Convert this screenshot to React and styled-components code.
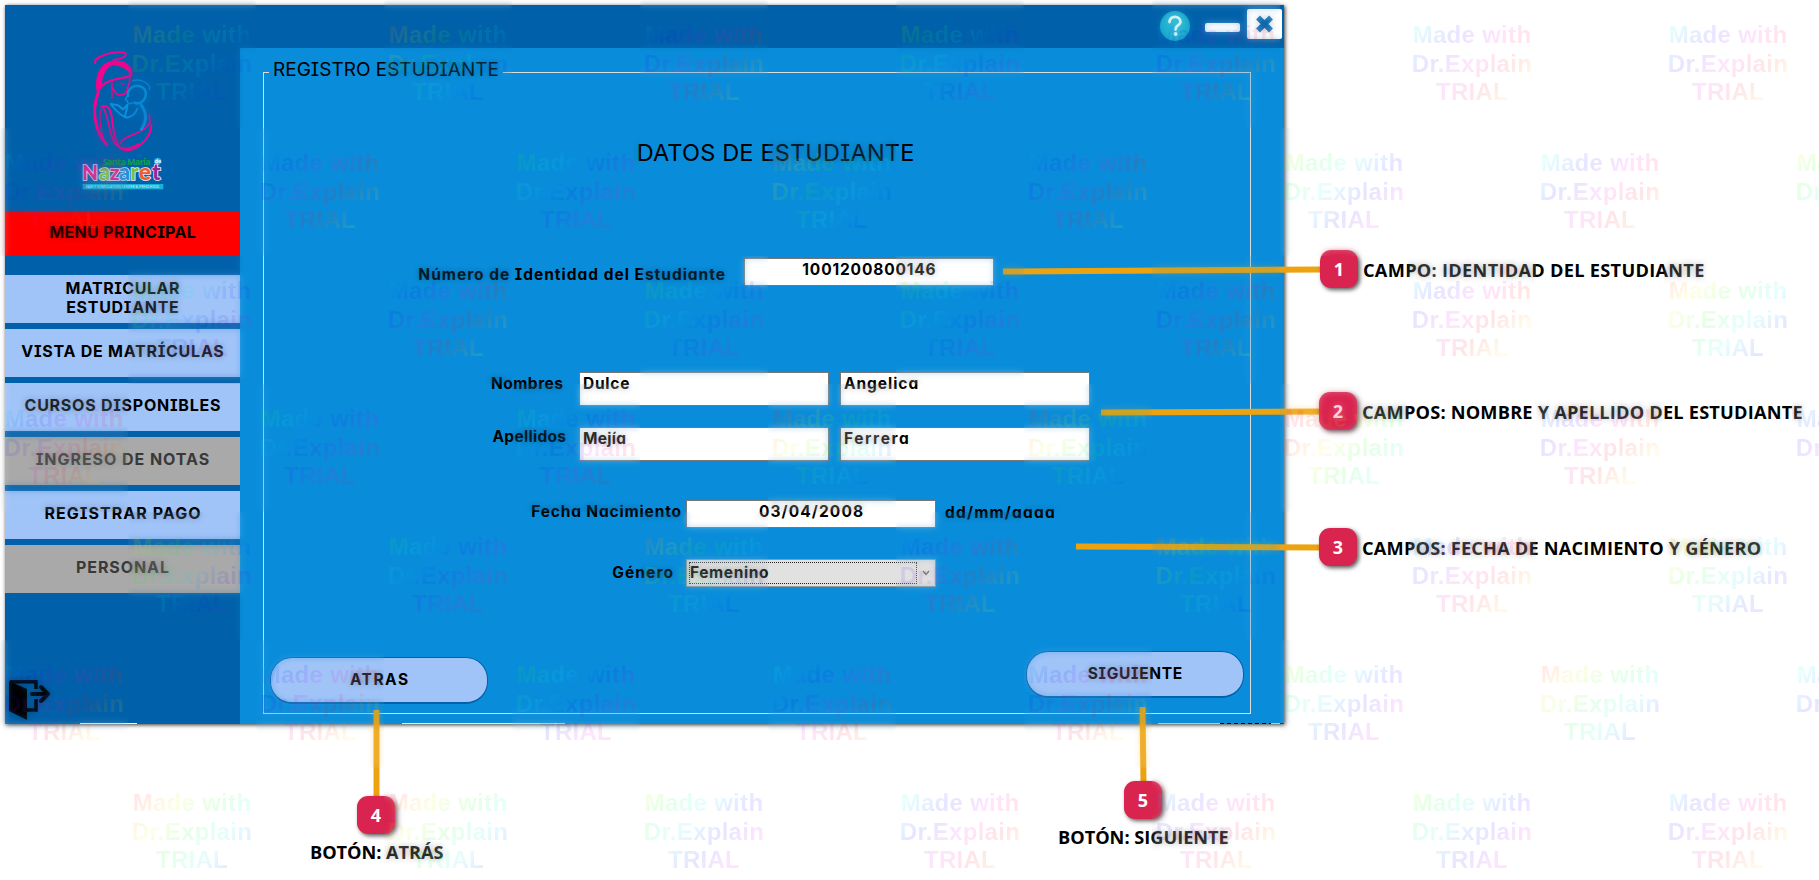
import React from "react";
import styled, { createGlobalStyle } from "styled-components";

const GlobalStyle = createGlobalStyle`
  body { margin: 0; background: #fff; overflow: hidden; }
  * { box-sizing: border-box; }
`;

const Page = styled.div`
  position: relative;
  width: 1819px;
  height: 880px;
  padding: 5px;
  overflow: hidden;
  font-family: "Inter", "Liberation Sans", sans-serif;
  font-feature-settings: "cv08", "cv11";
  font-size: 16px;
  font-weight: 700;
  line-height: 20px;
  color: #000;
`;

const Window = styled.div`
  display: flex;
  width: 1279px;
  height: 719px;
  background: #0061aa;
  box-shadow: 1px 1px 4px 0 rgba(0, 0, 0, 0.8);
`;

const Sidebar = styled.nav`
  display: flex;
  flex-direction: column;
  width: 235px;
`;

const LogoArea = styled.div`
  height: 207px;
  padding: 41px 0 0 71px;
`;

const Spaced = styled.span`
  letter-spacing: ${(p) => p.$ls}px;
  margin-right: ${(p) => -p.$ls}px;
  white-space: nowrap;
`;

const MenuHeading = styled.div`
  display: flex;
  align-items: center;
  justify-content: center;
  height: 44px;
  padding-bottom: 4px;
  margin-bottom: 19px;
  background: #f00;
`;

const MenuList = styled.div`
  display: flex;
  flex-direction: column;
  gap: 6px;
`;

const MenuButton = styled.div`
  display: flex;
  flex-direction: column;
  align-items: center;
  justify-content: center;
  height: 48px;
  padding-bottom: ${(p) => (p.$double ? 3 : 4)}px;
  line-height: 19px;
  background: ${(p) => (p.$disabled ? "#a9a9a9" : "#a0c4f8")};
  color: ${(p) => (p.$disabled ? "#393939" : "#000")};
`;

const ExitArea = styled.div`
  margin-top: auto;
  padding: 0 0 4px 4px;
  line-height: 0;
`;

const Main = styled.main`
  display: flex;
  flex-direction: column;
  flex: 1;
`;

const TitleBar = styled.header`
  display: flex;
  height: 43px;
  justify-content: flex-end;
  align-items: flex-start;
  padding: 4px 2px 0 0;
`;

const HelpIcon = styled.div`
  width: 30px;
  height: 30px;
  margin: 2px 15px 0 0;
`;

const MinimizeIcon = styled.div`
  width: 35px;
  height: 9px;
  margin: 14px 7px 0 0;
  border-radius: 2px;
  background: #fff;
`;

const CloseIcon = styled.div`
  width: 35px;
  height: 30px;
  border-radius: 2px;
  background: #fff;
`;

const Body = styled.section`
  flex: 1;
  padding: 24px 33px 0 23px;
  background: #098ddb;
`;

const Frame = styled.div`
  position: relative;
  display: flex;
  flex-direction: column;
  height: 642px;
  border: 1px solid #dcdcdc;
`;

const Legend = styled.div`
  position: absolute;
  top: -15px;
  left: 5px;
  padding: 0 4px 0 4px;
  background: #098ddb;
  font-size: 19px;
  font-weight: 400;
  line-height: 24px;
`;

const Title = styled.h1`
  margin: 67px 0 0;
  padding-left: 37px;
  font-size: 23.5px;
  font-weight: 400;
  line-height: 25px;
  text-align: center;
`;

const Row = styled.div`
  display: flex;
  align-items: flex-start;
  height: ${(p) => p.$height}px;
  margin-top: ${(p) => p.$top}px;
`;

const Label = styled.label`
  width: ${(p) => p.$width}px;
  margin-right: ${(p) => p.$gap}px;
  padding-top: ${(p) => p.$drop}px;
  font-size: 15.5px;
  text-align: right;
`;

const Field = styled.div`
  width: 250px;
  height: 100%;
  margin-right: 11px;
  padding: 1px 3px 0;
  border: 1px solid #777;
  background: #fff;
  font-size: 15.5px;
  text-align: ${(p) => (p.$center ? "center" : "left")};
`;

const Suffix = styled.span`
  margin: 3px 0 0 -2px;
  font-size: 15.5px;
`;

const Select = styled.div`
  display: flex;
  align-items: center;
  width: 250px;
  height: 28px;
  padding: 0 5px 0 2px;
  border: 1px solid #999;
  background: #e1e1e1;
  font-size: 15.5px;
`;

const SelectValue = styled.span`
  flex: 1;
  height: 22px;
  margin-right: 5px;
  border: 1px dotted #222;
  line-height: 19px;
`;

const Actions = styled.div`
  display: flex;
  justify-content: space-between;
  align-items: flex-start;
  margin-top: 63px;
  padding: 0 6px;
`;

const ActionButton = styled.div`
  width: 218px;
  height: 47px;
  margin-top: ${(p) => p.$drop}px;
  padding-top: 12px;
  border: 1px solid #0061aa;
  border-bottom-width: 2px;
  border-radius: 22px;
  background: #a0c4f8;
  font-size: 15.5px;
  text-align: center;
`;

const BottomSliver = styled.div`
  position: absolute;
  left: 5px;
  top: 723px;
  width: 1279px;
  height: 1px;
  background: linear-gradient(90deg, transparent 75px, #fff 75px 132px, transparent 132px 397px,
    #dff0fa 397px 560px, transparent 560px 1153px, #9fd0f2 1153px 1215px, transparent 1215px 1266px, #9fd0f2 1266px 1275px, #124 1275px),
    repeating-linear-gradient(90deg, #000 0 4px, transparent 4px 7px) 1215px 0 / 51px 1px no-repeat;
`;

const Connectors = styled.svg`
  position: absolute;
  left: 0;
  top: 0;
`;

const Badge = styled.div`
  position: absolute;
  left: ${(p) => p.$x}px;
  top: ${(p) => p.$y}px;
  width: 38px;
  height: 38px;
  border-radius: 11px;
  background: #d9244f;
  box-shadow: 2px 2px 4px rgba(0, 0, 0, 0.65);
  color: #fff;
  font: bold 18px/38px "Open Sans", sans-serif;
  font-feature-settings: normal;
  text-align: center;
`;

const Caption = styled.div`
  position: absolute;
  left: ${(p) => p.$x}px;
  top: ${(p) => p.$y}px;
  font: bold 18.2px/24px "Open Sans", sans-serif;
  font-feature-settings: normal;
  white-space: nowrap;
`;

const Overlay = styled.div`
  position: absolute;
  inset: 0;
  display: grid;
  grid-template-columns: repeat(15, 128px);
  grid-auto-rows: 128px;
  pointer-events: none;
`;

const Tile = styled.div`
  position: relative;
`;

const Haze = styled.div`
  position: absolute;
  inset: 0;
  backdrop-filter: blur(3px);
  opacity: 0.3;
`;

const Mark = styled.div`
  position: absolute;
  inset: 0;
  padding-top: 21px;
  background: ${(p) => p.$rainbow};
  background-clip: text;
  -webkit-background-clip: text;
  color: transparent;
  opacity: 0.1;
  font: bold 24px/28.5px "Liberation Sans", sans-serif;
  letter-spacing: 0.3px;
  text-align: center;
  white-space: pre;
`;

const MENU = [
  { lines: [["MATRICULAR", 0.5], ["ESTUDIANTE", 0.7]] },
  { lines: [["VISTA DE MATRÍCULAS", 0.75]] },
  { lines: [["CURSOS DISPONIBLES", 0.75]] },
  { lines: [["INGRESO DE NOTAS", 0.95]], disabled: true },
  { lines: [["REGISTRAR PAGO", 1.05]] },
  { lines: [["PERSONAL", 0.9]], disabled: true },
];

const CALLOUTS = [
  { n: 1, x: 1320, y: 250, tx: 1363, ty: 258, text: "CAMPO: IDENTIDAD DEL ESTUDIANTE", ls: 0.28 },
  { n: 2, x: 1319, y: 392, tx: 1362, ty: 400, text: "CAMPOS: NOMBRE Y APELLIDO DEL ESTUDIANTE", ls: 0.2 },
  { n: 3, x: 1319, y: 528, tx: 1362, ty: 536, text: "CAMPOS: FECHA DE NACIMIENTO Y GÉNERO", ls: 0.2 },
  { n: 4, x: 357, y: 796, tx: 310, ty: 840, text: "BOTÓN: ATRÁS", ls: -0.05 },
  { n: 5, x: 1124, y: 781, tx: 1058, ty: 825, text: "BOTÓN: SIGUIENTE", ls: -0.02 },
];

const HUES = [
  [40, 30, 200, 90, 200, 180, 180],
  [190, 200, 120, 20, 200, 80, 170, 80],
  [90, 200, 100, 100, 200, 200, 20],
  [190, 130, 140, 0, 0, 320, 200, 200],
  [60, 130, 30, 210, 30, 190, 40],
  [200, 200, 110, 170, 200, 90, 10, 170],
  [0, 0, 90, 170, 190, 95, 195],
];

const rainbow = (hue) => {
  const stops = [];
  for (let i = 0; i <= 12; i += 1) stops.push(`hsl(${(hue - 52 + i * 30 + 360) % 360} 100% 50%)`);
  return `linear-gradient(135deg, ${stops.join(", ")})`;
};

function Watermarks() {
  const tiles = [];
  for (let row = 0; row < 7; row += 1) {
    for (let col = 0; col < 15; col += 1) {
      const active = (row + col) % 2 === 1;
      tiles.push(
        <Tile key={`${row}-${col}`}>
          {active && <Haze />}
          {active && (
            <Mark $rainbow={rainbow(HUES[row][Math.floor(col / 2)])}>{"Made with\nDr.Explain\nTRIAL"}</Mark>
          )}
        </Tile>
      );
    }
  }
  return <Overlay>{tiles}</Overlay>;
}

function Logo() {
  const letters = [
    ["N", 18, "#e0218a", 62], ["a", 68, "#7ac143", 66], ["z", 101, "#e0218a", 64], ["a", 128, "#1b8fd6", 66],
    ["r", 163, "#7ac143", 66], ["e", 188, "#f0592a", 68], ["t", 228, "#8e2a9b", 68],
  ];
  return (
    <svg width="95" height="150" viewBox="0 0 285 450">
      <g fill="none" stroke="#f0058c" strokeLinecap="round" strokeLinejoin="round">
        <path d="M58 52C50 36 96 18 137 19C162 21 148 38 112 42" strokeWidth="6" />
        <path d="M66 140C58 98 70 52 112 47C148 44 166 62 166 86C156 102 90 90 67 134" strokeWidth="7" />
        <path d="M67 130C62 90 76 58 110 52C82 66 74 92 73 118Z" fill="#f0058c" strokeWidth="8" />
        <path d="M108 48C142 46 162 62 166 86C154 66 136 56 108 54Z" fill="#f0058c" strokeWidth="5" />
        <path d="M160 92C166 108 154 120 153 132C148 150 124 152 116 136L108 124" strokeWidth="5" />
        <path d="M132 111Q142 120 148 113" strokeWidth="3" />
        <path d="M68 136C54 170 52 205 62 240C70 268 80 282 92 296" strokeWidth="9" />
        <path d="M92 296C72 262 68 216 76 188" strokeWidth="3" />
        <path d="M76 182C96 174 104 190 108 216C112 260 120 300 138 310C180 324 226 274 226 236" strokeWidth="6" />
        <path d="M108 108L108 156" strokeWidth="4" />
        <path d="M82 186C96 206 100 264 116 292C134 314 158 312 188 294" strokeWidth="5" />
        <path d="M134 292C144 264 204 268 222 228L220 206" strokeWidth="5" />
      </g>
      <g fill="none" stroke="#0a90dc" strokeLinecap="round" strokeLinejoin="round">
        <path d="M156 150C152 120 194 108 208 134C214 160 194 178 176 170" strokeWidth="8" />
        <path d="M170 104C200 96 226 118 220 130" strokeWidth="4" />
        <path d="M156 148L148 160L154 166L158 174L172 170" strokeWidth="4" />
        <path d="M104 174L126 178L142 190L154 176C158 190 144 198 148 214C136 208 118 192 104 174Z" fill="#0061aa" strokeWidth="6" />
        <path d="M148 214C168 216 180 200 184 188" strokeWidth="6" />
        <path d="M196 178C212 200 212 226 196 250" strokeWidth="9" />
      </g>
      <text x="80" y="356" fontFamily="Open Sans" fontSize="27" fontWeight="700" fill="#12a04b" textLength="144">Santa María</text>
      <circle cx="245" cy="346" r="11" fill="#2aa9e0" />
      <text x="236" y="352" fontFamily="Open Sans" fontSize="16" fontWeight="700" fill="#fff">de</text>
      <g fontFamily="Lato" fontWeight="900" stroke="#f3e6f3" strokeWidth="5" paintOrder="stroke">
        {letters.map(([c, x, fill, size]) => (
          <text key={x} x={x} y="403" fill={fill} fontSize={size}>{c}</text>
        ))}
      </g>
      <rect x="20" y="414" width="242" height="16" fill="#19b0d8" />
      <text x="29" y="427" fontFamily="Open Sans" fontSize="12" fontWeight="600" fill="#bfeaf7" textLength="222" lengthAdjust="spacingAndGlyphs">
        EARLY STIMULATION CENTER &amp; PRESCHOOL
      </text>
    </svg>
  );
}

const ExitIcon = () => (
  <svg width="42" height="40" viewBox="0 0 42 40">
    <path d="M0 1L18 9V40L0 31Z" fill="#000" />
    <path d="M1 1.8H27V9M27 19V30H18" fill="none" stroke="#000" strokeWidth="3.6" />
    <path d="M23 14H38M32 7L39 14L32 21" fill="none" stroke="#000" strokeWidth="4" strokeLinecap="round" strokeLinejoin="round" />
  </svg>
);

export default function App() {
  return (
    <Page>
      <GlobalStyle />
      <Window>
        <Sidebar>
          <LogoArea><Logo /></LogoArea>
          <MenuHeading><Spaced $ls={0.3}>MENU PRINCIPAL</Spaced></MenuHeading>
          <MenuList>
            {MENU.map((item) => (
              <MenuButton key={item.lines[0][0]} $disabled={item.disabled} $double={item.lines.length > 1}>
                {item.lines.map(([text, ls]) => <Spaced key={text} $ls={ls}>{text}</Spaced>)}
              </MenuButton>
            ))}
          </MenuList>
          <ExitArea><ExitIcon /></ExitArea>
        </Sidebar>
        <Main>
          <TitleBar>
            <HelpIcon>
              <svg width="30" height="30" viewBox="0 0 30 30">
                <circle cx="15" cy="15" r="15" fill="#20b2d0" />
                <path d="M9.5 11C9.5 4 20.500 4.500 20.500 11C20.500 14.500 15.500 14 15.500 18.500" fill="none" stroke="#fff" strokeWidth="2.8" strokeLinecap="round" />
                <circle cx="15.500" cy="23" r="2" fill="#fff" />
              </svg>
            </HelpIcon>
            <MinimizeIcon />
            <CloseIcon>
              <svg width="35" height="30" viewBox="0 0 35 30">
                <path d="M11 8.500L24 21.500M24 8.500L11 21.500" stroke="#0061aa" strokeWidth="5.500" />
              </svg>
            </CloseIcon>
          </TitleBar>
          <Body>
            <Frame>
              <Legend><Spaced $ls={0}>REGISTRO ESTUDIANTE</Spaced></Legend>
              <Title><Spaced $ls={0.17}>DATOS DE ESTUDIANTE</Spaced></Title>
              <Row $top={93} $height={28}>
                <Label $width={461} $gap={19} $drop={7}><Spaced $ls={0.99}>Número de Identidad del Estudiante</Spaced></Label>
                <Field $center><Spaced $ls={0.85}>1001200800146</Spaced></Field>
              </Row>
              <Row $top={86} $height={34}>
                <Label $width={299} $gap={16} $drop={2}><Spaced $ls={0.5}>Nombres</Spaced></Label>
                <Field><Spaced $ls={0.75}>Dulce</Spaced></Field>
                <Field><Spaced $ls={0.95}>Angelica</Spaced></Field>
              </Row>
              <Row $top={21} $height={34}>
                <Label $width={302} $gap={13} $drop={0}><Spaced $ls={0.3}>Apellidos</Spaced></Label>
                <Field><Spaced $ls={0.3}>Mejía</Spaced></Field>
                <Field><Spaced $ls={1.6}>Ferrera</Spaced></Field>
              </Row>
              <Row $top={39} $height={28}>
                <Label $width={417} $gap={5} $drop={2}><Spaced $ls={0.83}>Fecha Nacimiento</Spaced></Label>
                <Field $center><Spaced $ls={1.1}>03/04/2008</Spaced></Field>
                <Suffix><Spaced $ls={1.2}>dd/mm/aaaa</Spaced></Suffix>
              </Row>
              <Row $top={31} $height={28}>
                <Label $width={409} $gap={13} $drop={4}><Spaced $ls={1.1}>Género</Spaced></Label>
                <Select>
                  <SelectValue><Spaced $ls={0.6}>Femenino</Spaced></SelectValue>
                  <svg width="8" height="6" viewBox="0 0 8 6"><path d="M1 1L4 4.500L7 1" fill="none" stroke="#555" strokeWidth="1.200" /></svg>
                </Select>
              </Row>
              <Actions>
                <ActionButton $drop={7}><Spaced $ls={1.5}>ATRAS</Spaced></ActionButton>
                <ActionButton $drop={1}><Spaced $ls={0.7}>SIGUIENTE</Spaced></ActionButton>
              </Actions>
            </Frame>
          </Body>
        </Main>
      </Window>
      <BottomSliver />
      <Connectors width="1819" height="880">
        <g stroke="#eda30f" strokeWidth="6">
          <path d="M1003 271.500L1322 269.500" />
          <path d="M1101 412.500L1322 411.500" />
          <path d="M1076 546.500L1322 547.500" />
          <path d="M376.500 710V798" />
          <path d="M1142.500 707L1143.500 783" />
        </g>
      </Connectors>
      {CALLOUTS.map((c) => (
        <React.Fragment key={c.n}>
          <Badge $x={c.x} $y={c.y}>{c.n}</Badge>
          <Caption $x={c.tx} $y={c.ty}><Spaced $ls={c.ls}>{c.text}</Spaced></Caption>
        </React.Fragment>
      ))}
      <Watermarks />
    </Page>
  );
}
